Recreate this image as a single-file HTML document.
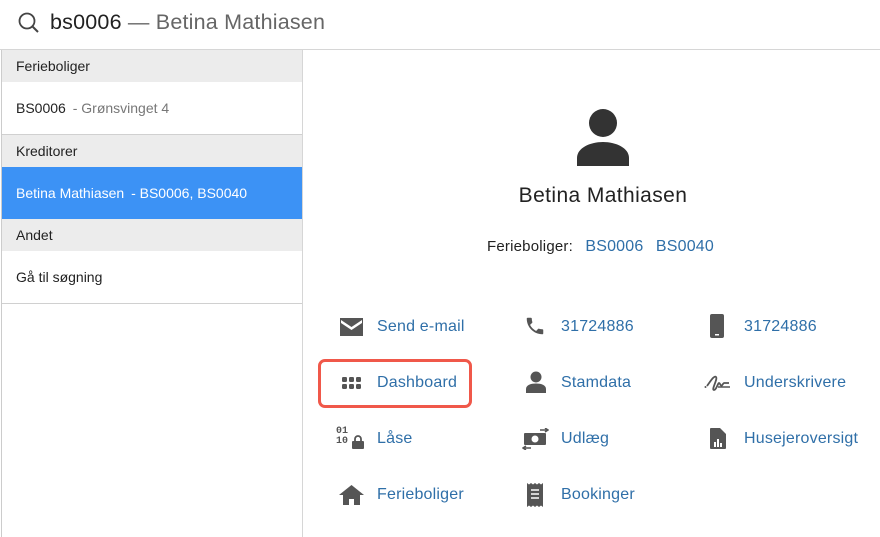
<!DOCTYPE html>
<html><head><meta charset="utf-8"><style>
body{margin:0;width:880px;height:537px;overflow:hidden;background:#fff;font-family:"Liberation Sans",Arial,sans-serif;position:relative}
.abs{position:absolute}
.top{left:0;top:0;width:880px;height:49px;border-bottom:1px solid #d6d6d6}
.left{left:1px;top:50px;width:300px;height:487px;border-right:1px solid #d6d6d6;border-left:1px solid #ccc}
.hdr{height:32px;background:#ececec;font-size:14px;color:#222;line-height:32px;padding-left:14px}
.row{height:52px;line-height:52px;font-size:14px;color:#222;padding-left:14px;border-bottom:1px solid #d0d0d0}
.sel{background:#3c92f5;color:#fff;border-bottom:none}
.lnk{color:#2f6fa8;font-size:16px}
.it{position:absolute;font-size:16px;color:#2f6fa8;line-height:20px;letter-spacing:0.2px}
.ic{position:absolute;fill:#555}
</style></head><body>
<div class="abs top">
<svg class="abs" style="left:17px;top:11px" width="24" height="24" viewBox="0 0 24 24"><circle cx="10" cy="10" r="7.5" fill="none" stroke="#444" stroke-width="1.8"/><path d="M15.5 15.5L21 21" stroke="#444" stroke-width="2"/></svg>
<div class="abs" style="left:50px;top:10px;font-size:21.5px;color:#222;letter-spacing:0.2px">bs0006 <span style="color:#666">— Betina Mathiasen</span></div>
</div>
<div class="abs left">
<div class="hdr">Ferieboliger</div>
<div class="row">BS0006 <span style="color:#777;margin-left:3px">- Grønsvinget 4</span></div>
<div class="hdr">Kreditorer</div>
<div class="row sel">Betina Mathiasen <span style="margin-left:3px">- BS0006, BS0040</span></div>
<div class="hdr">Andet</div>
<div class="row">Gå til søgning</div>
</div>
<svg class="abs" style="left:576px;top:108px" width="54" height="58" viewBox="0 0 54 58"><circle cx="27" cy="15" r="14" fill="#333"/><path d="M1 58V50C1 40 14 34 27 34S53 40 53 50V58Z" fill="#333"/></svg>
<div class="abs" style="left:450px;width:306px;text-align:center;top:184px;font-size:21px;color:#222;letter-spacing:0.4px">Betina Mathiasen</div>
<div class="abs" style="left:487px;top:238px;font-size:15px;color:#222;letter-spacing:0.2px">Ferieboliger: <span class="lnk" style="margin-left:8px">BS0006</span> <span class="lnk" style="margin-left:8px">BS0040</span></div>
<div class="abs" style="left:318px;top:359px;width:148px;height:43px;border:3px solid #f0584a;border-radius:7px"></div>

<svg class="ic" style="left:340px;top:318px" width="23" height="18" viewBox="0 0 23 18"><path d="M0 0H23V18H0Z M1 2L11.5 9 22 2V5L11.5 12 1 5Z" fill-rule="evenodd"/></svg>
<div class="it" style="left:377px;top:317px">Send e-mail</div>
<svg class="ic" style="left:524px;top:315px" width="22" height="22" viewBox="0 0 24 24"><path d="M6.6 10.8c1.4 2.8 3.8 5.1 6.6 6.6l2.2-2.2c.3-.3.7-.4 1-.2 1.1.4 2.3.6 3.6.6.6 0 1 .4 1 1V20c0 .6-.4 1-1 1C10.6 21 3 13.4 3 4c0-.6.4-1 1-1h3.5c.6 0 1 .4 1 1 0 1.3.2 2.5.6 3.6.1.3 0 .7-.2 1z"/></svg>
<div class="it" style="left:561px;top:317px">31724886</div>
<svg class="ic" style="left:710px;top:314px" width="14" height="24" viewBox="0 0 14 24"><rect width="14" height="24" rx="2"/><rect x="5" y="20" width="4" height="1.5" fill="#fff"/></svg>
<div class="it" style="left:744px;top:317px">31724886</div>

<svg class="ic" style="left:342px;top:377px" width="20" height="13" viewBox="0 0 20 13"><g><rect x="0" y="0" width="5" height="5" rx="1.2"/><rect x="7" y="0" width="5" height="5" rx="1.2"/><rect x="14" y="0" width="5" height="5" rx="1.2"/><rect x="0" y="7" width="5" height="5" rx="1.2"/><rect x="7" y="7" width="5" height="5" rx="1.2"/><rect x="14" y="7" width="5" height="5" rx="1.2"/></g></svg>
<div class="it" style="left:377px;top:373px">Dashboard</div>
<svg class="ic" style="left:526px;top:371px" width="20" height="22" viewBox="0 0 20 22"><circle cx="10" cy="6" r="5.5"/><path d="M0 22V18C0 14 5 12.5 10 12.5S20 14 20 18V22Z"/></svg>
<div class="it" style="left:561px;top:373px">Stamdata</div>
<svg class="abs" style="left:704px;top:372px" width="26" height="20" viewBox="0 0 26 20"><path d="M3 14C6 10 10 3 12 5S7 18 10 18 14 8 16 12 18 12 20 11H25" fill="none" stroke="#555" stroke-width="1.8"/><path d="M14 15H26" stroke="#555" stroke-width="1.5"/><circle cx="1.5" cy="15" r="1" fill="#555"/></svg>
<div class="it" style="left:744px;top:373px">Underskrivere</div>

<div class="abs" style="left:336px;top:427px;font-size:10px;font-weight:bold;color:#555;line-height:10px;font-family:'Liberation Mono',monospace">01<br>10</div>
<svg class="ic" style="left:352px;top:435px" width="12" height="14" viewBox="0 0 12 14"><path d="M3 6V4A3 3 0 0 1 9 4V6" fill="none" stroke="#555" stroke-width="1.8"/><rect x="0" y="6" width="12" height="8" rx="1"/></svg>
<div class="it" style="left:377px;top:429px">Låse</div>
<svg class="ic" style="left:522px;top:428px" width="27" height="22" viewBox="0 0 27 22"><rect x="2" y="5" width="22" height="12" rx="1"/><circle cx="13" cy="11" r="3.5" fill="#fff"/><path d="M18 2H26M23 0L26 2 23 4M9 20H1M4 18L1 20 4 22" stroke="#555" stroke-width="1.5" fill="none"/></svg>
<div class="it" style="left:561px;top:429px">Udlæg</div>
<svg class="ic" style="left:710px;top:428px" width="16" height="21" viewBox="0 0 16 21"><path d="M0 1C0 .4.4 0 1 0H10L16 6V20C16 20.6 15.6 21 15 21H1C.4 21 0 20.6 0 20Z"/><rect x="4" y="14" width="2" height="5" fill="#fff"/><rect x="7" y="11" width="2" height="8" fill="#fff"/><rect x="10" y="15" width="2" height="4" fill="#fff"/></svg>
<div class="it" style="left:744px;top:429px">Husejeroversigt</div>

<svg class="ic" style="left:339px;top:485px" width="25" height="20" viewBox="0 0 25 20"><path d="M12.5 0L25 10H21V20H15V14H10V20H4V10H0Z"/></svg>
<div class="it" style="left:377px;top:485px">Ferieboliger</div>
<svg class="ic" style="left:527px;top:483px" width="16" height="24" viewBox="0 0 16 24"><path d="M0 0L2 1.5 4 0 6 1.5 8 0 10 1.5 12 0 14 1.5 16 0V24L14 22.5 12 24 10 22.5 8 24 6 22.5 4 24 2 22.5 0 24Z"/><path d="M4 7H12M4 11H12M4 15H12" stroke="#fff" stroke-width="1.6"/></svg>
<div class="it" style="left:561px;top:485px">Bookinger</div>
</body></html>
